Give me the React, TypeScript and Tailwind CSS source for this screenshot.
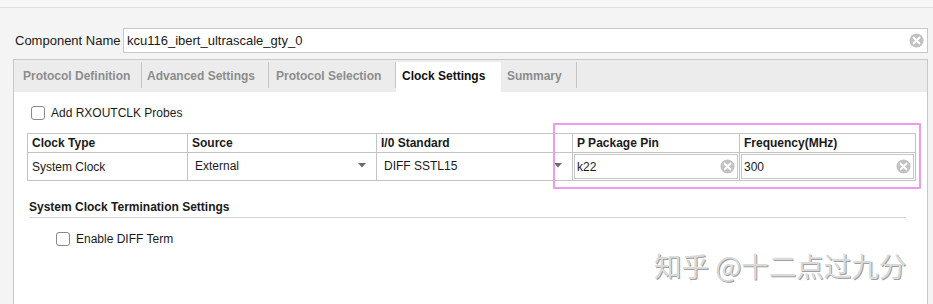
import React from "react";

const ClearIcon = () => (
  <svg width="15" height="15" viewBox="0 0 16 16" className="shrink-0">
    <circle cx="8" cy="8" r="7.5" fill="#c2c2c2" />
    <path d="M5 5 L11 11 M11 5 L5 11" stroke="#ffffff" strokeWidth="2.2" strokeLinecap="round" />
  </svg>
);

const Caret = () => (
  <svg width="8" height="5" viewBox="0 0 8 5" className="shrink-0">
    <path d="M0 0 L8 0 L4 4.5 Z" fill="#6a6a6a" />
  </svg>
);

const Checkbox = () => (
  <div className="w-[14px] h-[14px] rounded-[3px] border border-[#8a8a8a] bg-white shrink-0" />
);

const Sep = () => <div className="w-px h-[26px] bg-[#c4c4c4] self-start mt-[2px] shrink-0" />;

export default function App() {
  return (
    <div
      className="relative w-[933px] h-[304px] overflow-hidden bg-[#f4f4f4] text-[12px] leading-[16px] text-[#1a1a1a]"
      style={{ fontFamily: '"Liberation Sans", Arial, sans-serif' }}
    >
      <div className="h-[8px] border-b border-[#e0e0e0] bg-[#f6f6f6]" />

      {/* Component name row */}
      <div className="flex items-center mt-[20px] pl-[15px]">
        <div className="w-[108px] text-[13px] text-[#1a1a1a]">Component Name</div>
        <div className="flex items-center w-[805px] h-[25px] bg-white border border-[#c8c8c8] pl-[3px] pr-[3px]">
          <span className="flex-1 text-[13px]">kcu116_ibert_ultrascale_gty_0</span>
          <ClearIcon />
        </div>
      </div>

      {/* Tab panel */}
      <div className="ml-[13px] mt-[6px] w-[915px] h-[300px] border border-[#c8c8c8] bg-white">
        <div className="flex h-[32px] bg-[#ececec] font-bold text-[12px] text-[#8c8c8c]">
          <div className="w-[127px] pl-[9px] flex items-center">Protocol Definition</div>
          <Sep />
          <div className="w-[126px] pl-[5px] flex items-center">Advanced Settings</div>
          <Sep />
          <div className="w-[126px] pl-[7px] flex items-center">Protocol Selection</div>
          <Sep />
          <div className="w-[105px] pl-[6px] mt-[2px] pb-[2px] flex items-center bg-white text-[#111111]">Clock Settings</div>
          <div className="w-[75px] pl-[6px] flex items-center">Summary</div>
          <Sep />
        </div>

        <div className="relative pt-[13px]">
          <div className="flex items-center pl-[17px] gap-[6px]">
            <Checkbox />
            <span>Add RXOUTCLK Probes</span>
          </div>

          {/* Table */}
          <div className="ml-[13px] mt-[12px] w-[889px] border border-[#c4c4c4]">
            <div className="flex h-[19px] font-bold items-center border-b border-[#c4c4c4]">
              <div className="w-[160px] pl-[4px] border-r border-[#c4c4c4] h-full flex items-center">Clock Type</div>
              <div className="w-[189px] pl-[4px] border-r border-[#c4c4c4] h-full flex items-center">Source</div>
              <div className="w-[196px] pl-[4px] border-r border-[#c4c4c4] h-full flex items-center">I/0 Standard</div>
              <div className="w-[167px] pl-[4px] border-r border-[#c4c4c4] h-full flex items-center">P Package Pin</div>
              <div className="flex-1 pl-[4px] h-full flex items-center">Frequency(MHz)</div>
            </div>
            <div className="flex h-[27px] items-center">
              <div className="w-[160px] pl-[4px] border-r border-[#c4c4c4] h-full flex items-center pt-[1px]">System Clock</div>
              <div className="w-[189px] pl-[7px] pr-[10px] border-r border-[#c4c4c4] h-full flex items-center justify-between pb-[2px]">
                <span>External</span>
                <Caret />
              </div>
              <div className="w-[196px] pl-[7px] pr-[10px] border-r border-[#c4c4c4] h-full flex items-center justify-between pb-[2px]">
                <span>DIFF SSTL15</span>
                <Caret />
              </div>
              <div className="w-[167px] h-full border-r border-[#c4c4c4] p-[1px]">
                <div className="h-full border border-[#c8c8c8] flex items-center pl-[2px] pr-[2px] justify-between">
                  <span>k22</span>
                  <ClearIcon />
                </div>
              </div>
              <div className="flex-1 h-full p-[1px]">
                <div className="h-full border border-[#c8c8c8] flex items-center pl-[2px] pr-[2px] justify-between">
                  <span>300</span>
                  <ClearIcon />
                </div>
              </div>
            </div>
          </div>

          {/* Highlight box */}
          <div className="absolute left-[539px] top-[31px] w-[368px] h-[66px] border-2 border-[#ee9aee] rounded-[1px]" />

          <div className="ml-[15px] mt-[19px] w-[877px] leading-[14px] pb-[3px] border-b border-[#d4d4d4] font-bold">
            System Clock Termination Settings
          </div>

          <div className="flex items-center pl-[42px] gap-[6px] mt-[13px]">
            <Checkbox />
            <span>Enable DIFF Term</span>
          </div>
        </div>
      </div>

      {/* Watermark */}
      <div
        className="absolute left-[654px] top-[252px] text-[27.5px] leading-none text-[#dadada] whitespace-nowrap [text-shadow:1px_1px_0_#a0a0a0]"
        style={{ fontFamily: '"Noto Sans CJK SC", "Noto Sans", sans-serif' }}
      >
        知乎 @十二点过九分
      </div>
    </div>
  );
}
